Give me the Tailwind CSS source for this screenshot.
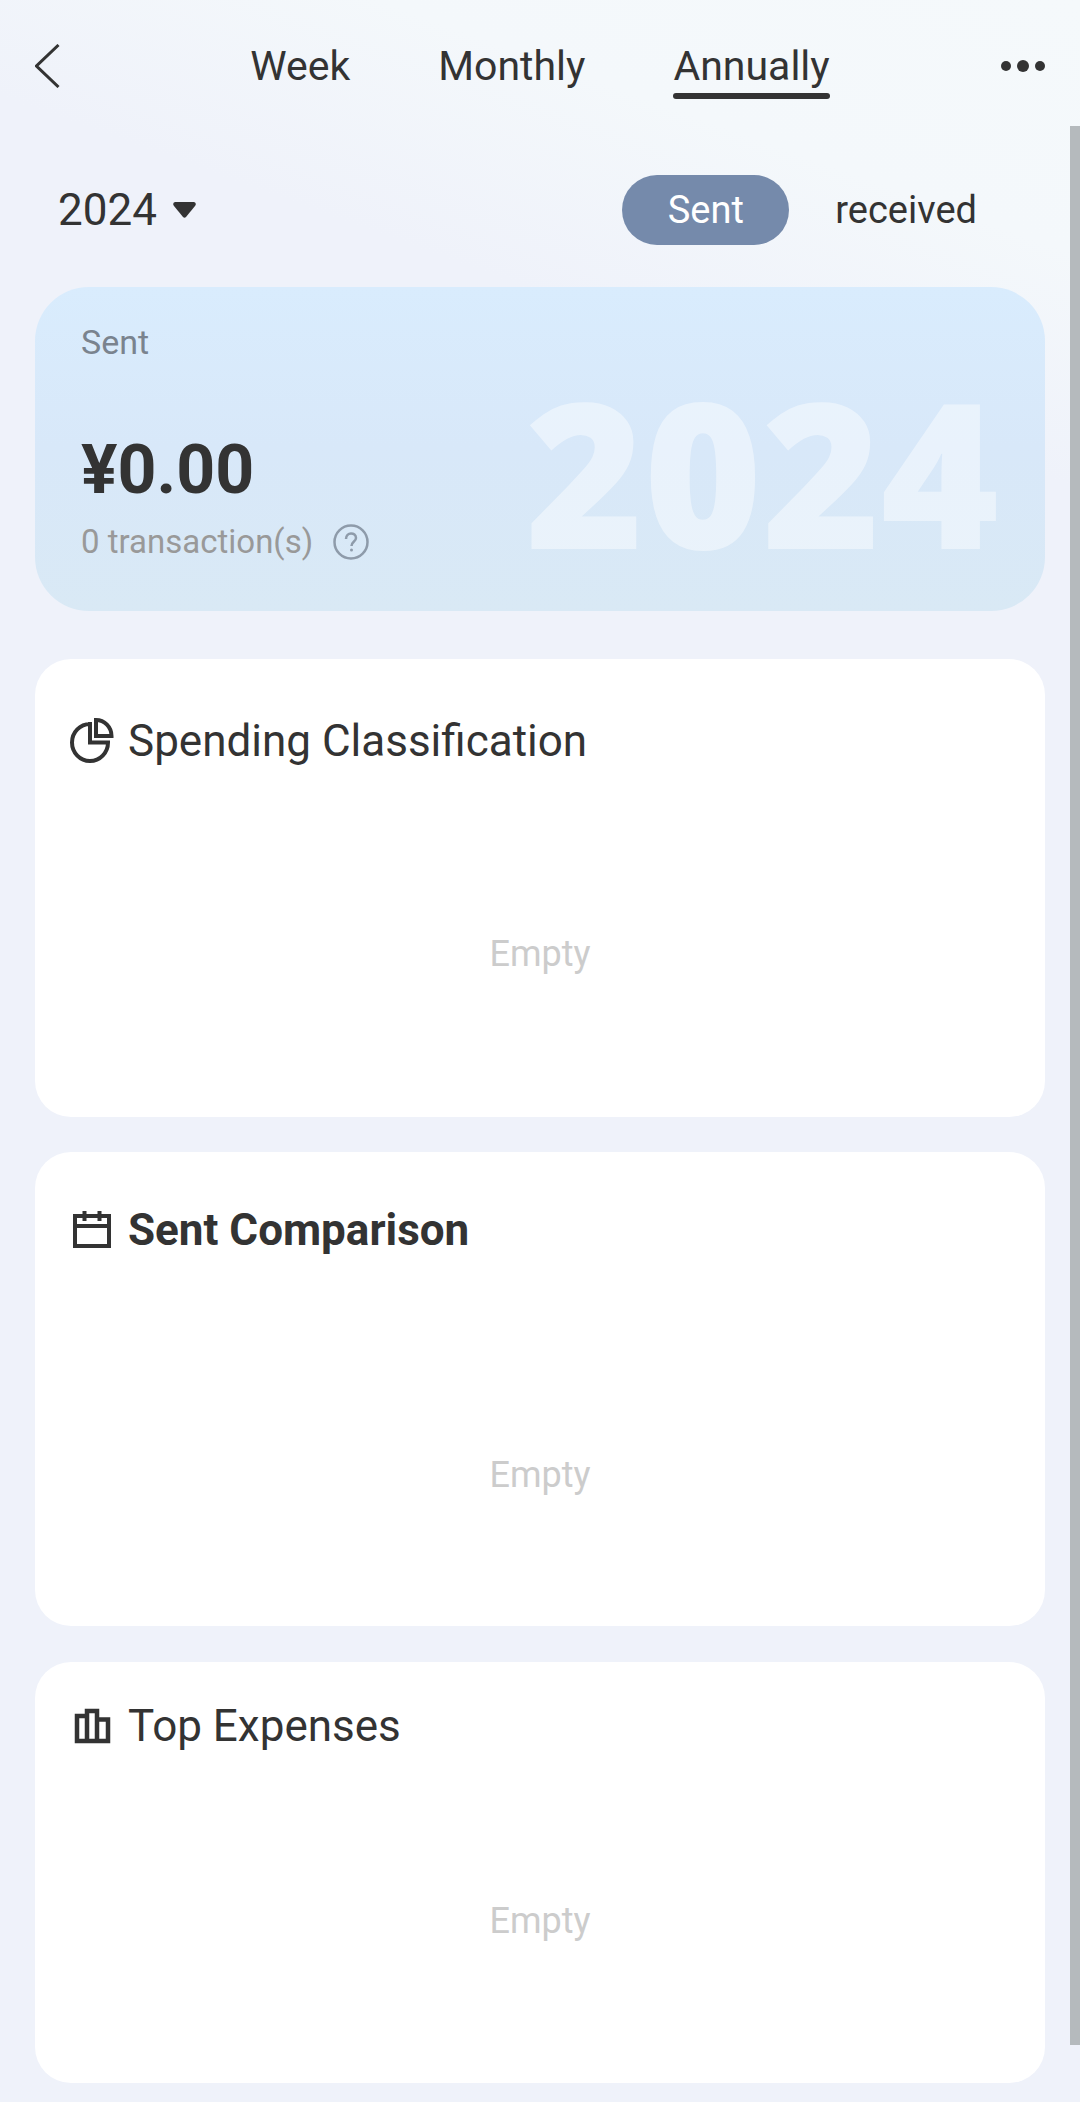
<!DOCTYPE html>
<html lang="en">
<head>
<meta charset="utf-8">
<meta name="viewport" content="width=device-width, initial-scale=1">
<title>Annual summary</title>
<script src="https://cdn.jsdelivr.net/npm/@tailwindcss/browser@4"></script>
</head>
<body class="relative bg-[#eff2fa] bg-[linear-gradient(200deg,#f5f9fb_0px,#f4f8fb_240px,#eff2fa_460px)] bg-no-repeat font-[Roboto,sans-serif] text-[#333]">
  <header class="flex h-[126px] items-start justify-between px-[35px] pt-[39px]">
    <button type="button" aria-label="Back" class="flex h-[54px] w-[80px] items-center">
      <svg class="h-[44px] w-[25px]" viewBox="0 0 25 44" fill="none" stroke="currentColor" stroke-width="3"><path d="M23.500 1 1.500 22 23.500 43"/></svg>
    </button>
    <nav class="flex gap-[88px] text-[41px] leading-[54px]">
      <a href="#week">Week</a>
      <a href="#monthly">Monthly</a>
      <a href="#annually" aria-current="page">Annually<span class="block h-[6px] rounded-full bg-[#333]"></span></a>
    </nav>
    <button type="button" aria-label="More" class="flex h-[54px] w-[80px] items-center justify-end">
      <svg class="h-[12px] w-[44px]" viewBox="0 0 44 12" fill="currentColor"><circle cx="5" cy="6" r="5"/><circle cx="22" cy="6" r="6"/><circle cx="39" cy="6" r="5"/></svg>
    </button>
  </header>

  <main class="px-[35px] pb-[19px]">
    <div class="flex items-center justify-between pt-[49px] pr-[34px] pl-[23px]">
      <button type="button" class="flex items-center gap-[16px] text-[44px] leading-[70px]">2024
        <svg class="h-[16px] w-[23px]" viewBox="0 0 23 16" fill="currentColor"><path d="M2 0H21Q24 1 22 4L13 15Q11.500 16.500 10 15L1 4Q-1 1 2 0Z"/></svg>
      </button>
      <div class="flex text-[38px] leading-[70px]">
        <button type="button" aria-pressed="true" class="w-[167px] rounded-full bg-[#758aab] text-white">Sent</button>
        <button type="button" aria-pressed="false" class="px-[46px] pr-[34px]">received</button>
      </div>
    </div>

    <section class="mt-[42px] flex h-[324px] justify-between rounded-[54px] bg-linear-to-b from-[#d9ecfd] via-[#d8e8f9] to-[#d9e9f5] pr-[46px] pl-[46px]">
      <div class="pt-[35px]">
        <h2 class="text-[34px] leading-[40px] text-[#7a838e]">Sent</h2>
        <p class="mt-[68px] text-[68px] leading-[80px] font-bold">¥0.00</p>
        <div class="mt-[12px] flex items-center gap-[20px] text-[33px] leading-[40px] text-[#999]">
          <span>0 transaction(s)</span>
          <button type="button" aria-label="About transactions">
            <svg class="h-[36px] w-[36px]" viewBox="0 0 36 36" fill="none" stroke="#8e9baa" stroke-width="2.500"><circle cx="18" cy="18" r="16.500"/><path d="M13 15C13 7.500 23 8 23 14 23 17.500 18.500 17.500 18.500 22"/><circle cx="18.500" cy="26" r="1.500" fill="#8e9baa" stroke="none"/></svg>
          </button>
        </div>
      </div>
      <p aria-hidden="true" class="pt-[84px] font-['Noto_Sans'] text-[202px] leading-[200px] font-black text-white/45">2024</p>
    </section>

    <section class="mt-[48px] flex h-[458px] flex-col rounded-[36px] bg-white px-[35px] pt-[52px]">
      <h2 class="flex items-center gap-[14px] text-[44px] leading-[60px]">
        <svg class="h-[46px] w-[44px]" viewBox="0 1 44 46" fill="none" stroke="currentColor" stroke-width="4"><path d="M20 5V25.500H38A18 18.500 0 1 1 20 7"/><path d="M26 3V19H41.500A15.500 16 0 0 0 26 3Z"/></svg>
        Spending Classification
      </h2>
      <p class="mt-[157px] text-center text-[36px] leading-[52px] text-[#ccc]">Empty</p>
    </section>

    <section class="mt-[35px] flex h-[474px] flex-col rounded-[36px] bg-white px-[35px] pt-[48px]">
      <h2 class="flex items-center gap-[14px] text-[44px] leading-[60px] font-bold">
        <svg class="h-[38px] w-[44px]" viewBox="-3 0 44 38" fill="none" stroke="currentColor" stroke-width="4"><path d="M2 5H36V35H2ZM2 15H36M11.500 0V10M26.500 0V10"/></svg>
        Sent Comparison
      </h2>
      <p class="mt-[189px] text-center text-[36px] leading-[52px] text-[#ccc]">Empty</p>
    </section>

    <section class="mt-[36px] flex h-[421px] flex-col rounded-[36px] bg-white px-[35px] pt-[34px]">
      <h2 class="flex items-center gap-[14px] text-[44px] leading-[60px]">
        <svg class="h-[36px] w-[44px]" viewBox="-4 0 44 36" fill="none" stroke="currentColor" stroke-width="4.500"><path d="M13 8H3V33H34V11.500H23M13 33V3H23V33"/></svg>
        Top Expenses
      </h2>
      <p class="mt-[139px] text-center text-[36px] leading-[52px] text-[#ccc]">Empty</p>
    </section>
  </main>

  <div aria-hidden="true" class="absolute top-[126px] right-0 bottom-[57px] w-[10px] bg-[#b5babd]"></div>
</body>
</html>
